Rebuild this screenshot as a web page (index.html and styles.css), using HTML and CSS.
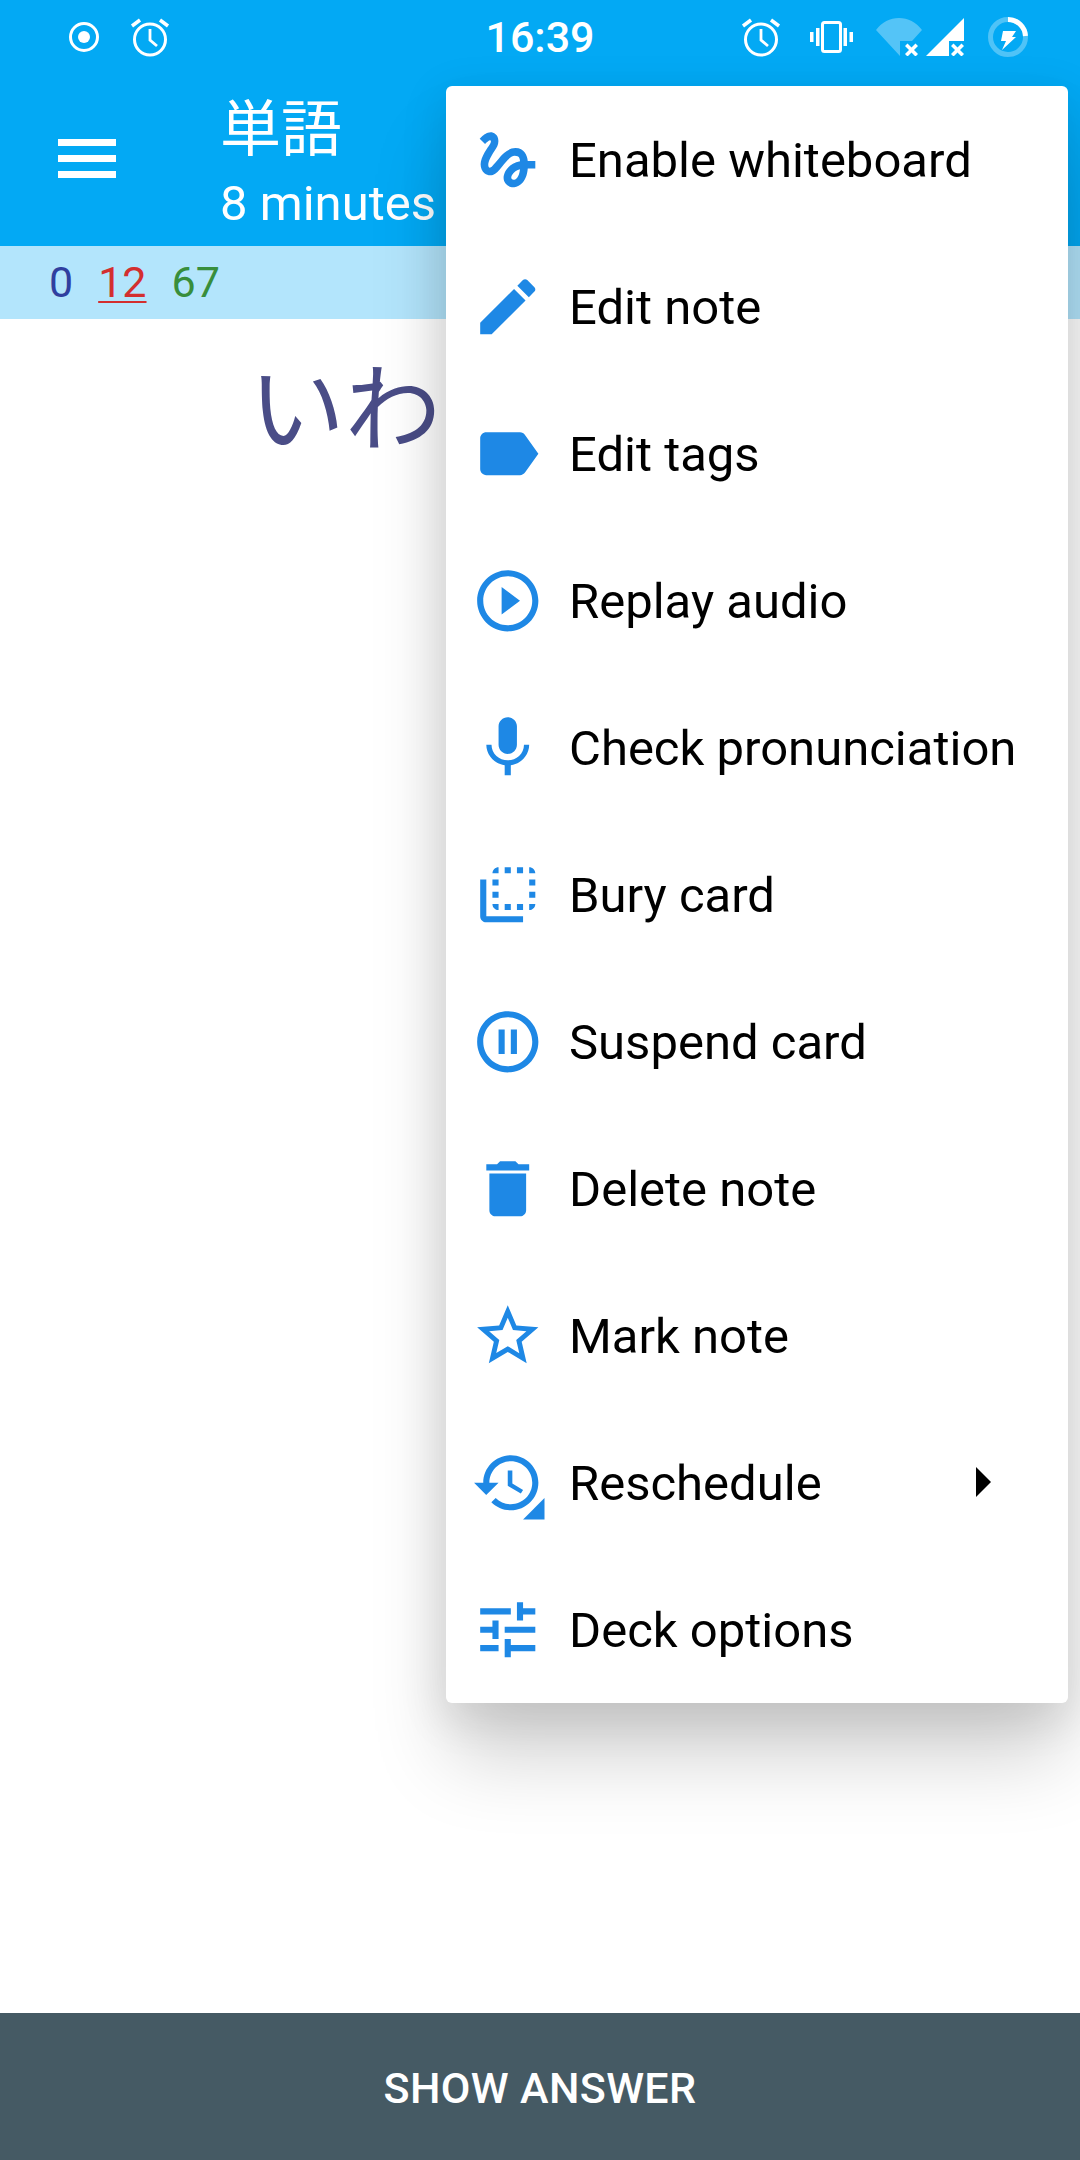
FILE: index.html
```html
<!DOCTYPE html>
<html lang="en">
<head>
<meta charset="utf-8">
<title>単語</title>
<link rel="stylesheet" href="styles.css">
</head>
<body>
<div class="screen">
  <header class="appbar">
    <div class="status">
      <div class="status-left">
        <svg class="ic-record" viewBox="0 0 32 32"><circle cx="16" cy="16" r="13.500" fill="none" stroke="#fff" stroke-width="3"/><circle cx="16" cy="16" r="6" fill="#fff"/></svg>
        <svg class="ic-alarm" viewBox="0 0 40 40"><use href="#alarm"/></svg>
      </div>
      <div class="clock">16:39</div>
      <div class="status-right">
        <svg class="ic-alarm" viewBox="0 0 40 40"><use href="#alarm"/></svg>
        <svg class="ic-vib" viewBox="0 0 43 32"><rect x="12.500" y="1.500" width="18" height="29" rx="2" fill="none" stroke="#fff" stroke-width="3"/><path d="M0 11h3.500v10H0zM6 7h3.500v18H6zM33.500 7H37v18h-3.500zM39.500 11H43v10h-3.500z" fill="#fff"/></svg>
        <svg class="ic-wifi" viewBox="0 0 46 38"><path d="M0 12C6 4 14 0 23 0s17 4 23 12L36 23H24v15z" fill="#fff" fill-opacity=".32"/><path d="M29 28l2.500-2.500 4 4 4-4L42 28l-4 4 4 4-2.500 2.500-4-4-4 4L29 36l4-4z" fill="#fff"/></svg>
        <svg class="ic-signal" viewBox="0 0 38 38"><path d="M0 38L38 0v23H23v15z" fill="#fff"/><path d="M25 28l2.500-2.500 4 4 4-4L38 28l-4 4 4 4-2.500 2.500-4-4-4 4L25 36l4-4z" fill="#fff"/></svg>
        <svg class="ic-batt" viewBox="0 0 40 40"><circle cx="20" cy="20" r="17.500" fill="none" stroke="#fff" stroke-opacity=".3" stroke-width="5"/><path d="M20 2.500A17.500 17.500 0 0 1 37.500 19" fill="none" stroke="#fff" stroke-width="5"/><path d="M15 14h13l-4 6h4L14 33l4-9h-5z" fill="#fff"/></svg>
      </div>
    </div>
    <div class="toolbar">
      <button class="burger" aria-label="Menu"><span></span><span></span><span></span></button>
      <div class="titles">
        <div class="title">単語</div>
        <div class="subtitle">8 minutes</div>
      </div>
    </div>
  </header>
  <div class="counts">
    <span class="new">0</span>
    <span class="learn">12</span>
    <span class="review">67</span>
  </div>
  <main class="card">
    <div class="word">いわ</div>
  </main>
  <footer class="answer">SHOW ANSWER</footer>

  <nav class="menu">
    <div class="item"><svg class="icon" viewBox="0 0 24 24"><path d="M4.59 6.89c.7-.71 1.4-1.35 1.71-1.22.5.2 0 1.03-.3 1.52-.25.42-2.86 3.89-2.86 6.31 0 1.28.48 2.34 1.34 2.98.75.56 1.74.73 2.64.46 1.07-.31 1.95-1.4 3.06-2.77 1.21-1.49 2.83-3.44 4.08-3.44 1.63 0 1.65 1.01 1.76 1.79-3.78.64-5.38 3.67-5.38 5.37 0 1.7 1.44 3.09 3.21 3.09 1.63 0 4.29-1.33 4.69-6.1H21v-2.5h-2.47c-.15-1.65-1.09-4.2-4.03-4.2-2.25 0-4.18 1.91-4.94 2.84-.58.73-2.06 2.48-2.29 2.72-.25.3-.68.84-1.11.84-.45 0-.72-.83-.36-1.92.35-1.09 1.4-2.86 1.85-3.52.78-1.14 1.3-1.92 1.3-3.28C8.95 3.69 7.31 3 6.44 3 5.12 3 3.97 4 3.72 4.25c-.36.36-.66.66-.88.93l1.75 1.71zm9.29 11.66c-.31 0-.74-.26-.74-.72 0-.6.73-2.2 2.87-2.76-.3 2.69-1.43 3.48-2.13 3.48z"/></svg><span>Enable whiteboard</span></div>
    <div class="item"><svg class="icon" viewBox="0 0 24 24"><path d="M3 17.25V21h3.75L17.81 9.94l-3.75-3.75L3 17.25zM20.71 7.04c.39-.39.39-1.02 0-1.41l-2.34-2.34c-.39-.39-1.02-.39-1.41 0l-1.83 1.83 3.75 3.75 1.83-1.83z"/></svg><span>Edit note</span></div>
    <div class="item"><svg class="icon" viewBox="0 0 24 24"><path d="M17.63 5.84C17.27 5.33 16.67 5 16 5L5 5.01C3.9 5.01 3 5.9 3 7v10c0 1.1.9 1.99 2 1.99L16 19c.67 0 1.27-.33 1.63-.84L22 12l-4.37-6.16z"/></svg><span>Edit tags</span></div>
    <div class="item"><svg class="icon" viewBox="0 0 24 24"><path d="M10 16.5l6-4.5-6-4.5v9zM12 2C6.48 2 2 6.48 2 12s4.48 10 10 10 10-4.48 10-10S17.52 2 12 2zm0 18c-4.41 0-8-3.59-8-8s3.59-8 8-8 8 3.59 8 8-3.59 8-8 8z"/></svg><span>Replay audio</span></div>
    <div class="item"><svg class="icon" viewBox="0 0 24 24"><path d="M12 14c1.66 0 2.99-1.34 2.99-3L15 5c0-1.66-1.34-3-3-3S9 3.34 9 5v6c0 1.66 1.34 3 3 3zm5.3-3c0 3-2.54 5.1-5.3 5.1S6.7 14 6.7 11H5c0 3.41 2.72 6.23 6 6.72V21h2v-3.28c3.28-.48 6-3.3 6-6.72h-1.7z"/></svg><span>Check pronunciation</span></div>
    <div class="item"><svg class="icon" viewBox="0 0 24 24"><path d="M9 7H7v2h2V7zm0 4H7v2h2v-2zm0-8c-1.11 0-2 .9-2 2h2V3zm4 12h-2v2h2v-2zm6-12v2h2c0-1.1-.9-2-2-2zm-6 0h-2v2h2V3zM9 17v-2H7c0 1.1.89 2 2 2zm10-4h2v-2h-2v2zm0-4h2V7h-2v2zm0 8c1.1 0 2-.9 2-2h-2v2zM5 7H3v12c0 1.1.89 2 2 2h12v-2H5V7zm10-2h2V3h-2v2zm0 12h2v-2h-2v2z"/></svg><span>Bury card</span></div>
    <div class="item"><svg class="icon" viewBox="0 0 24 24"><path d="M9 16h2V8H9v8zm3-14C6.48 2 2 6.48 2 12s4.48 10 10 10 10-4.48 10-10S17.52 2 12 2zm0 18c-4.41 0-8-3.59-8-8s3.59-8 8-8 8 3.59 8 8-3.59 8-8 8zm1-4h2V8h-2v8z"/></svg><span>Suspend card</span></div>
    <div class="item"><svg class="icon" viewBox="0 0 24 24"><path d="M6 19c0 1.1.9 2 2 2h8c1.1 0 2-.9 2-2V7H6v12zM19 4h-3.500l-1-1h-5l-1 1H5v2h14V4z"/></svg><span>Delete note</span></div>
    <div class="item"><svg class="icon" viewBox="0 0 24 24"><path d="M22 9.240l-7.190-.62L12 2 9.190 8.630 2 9.240l5.460 4.730L5.820 21 12 17.270 18.180 21l-1.630-7.030L22 9.240zM12 15.400l-3.760 2.270 1-4.280-3.320-2.880 4.380-.38L12 6.100l1.710 4.040 4.380.38-3.320 2.880 1 4.280L12 15.400z"/></svg><span>Mark note</span></div>
    <div class="item"><svg class="icon" viewBox="0 0 24 24"><path d="M13 3c-4.970 0-9 4.030-9 9H1l3.890 3.890.07.14L9 12H6c0-3.870 3.130-7 7-7s7 3.130 7 7-3.130 7-7 7c-1.930 0-3.680-.79-4.940-2.060l-1.420 1.420C8.270 19.990 10.510 21 13 21c4.970 0 9-4.030 9-9s-4.030-9-9-9zm-1 5v5l4.280 2.540.72-1.210-3.500-2.080V8H12z"/><path d="M24 17v7h-7z"/></svg><span>Reschedule</span><i class="more"></i></div>
    <div class="item"><svg class="icon" viewBox="0 0 24 24"><path d="M3 17v2h6v-2H3zM3 5v2h10V5H3zm10 16v-2h8v-2h-8v-2h-2v6h2zM7 9v2H3v2h4v2h2V9H7zm14 4v-2H11v2h10zm-6-4h2V7h4V5h-4V3h-2v6z"/></svg><span>Deck options</span></div>
  </nav>
</div>
<svg class="defs" width="0" height="0"><defs><g id="alarm" fill="none" stroke="#fff"><circle cx="20" cy="22.500" r="15.500" stroke-width="3"/><path d="M20 12v11l7 6" stroke-width="2.800"/><path d="M2 9l8-6M38 9l-8-6" stroke-width="3.500"/></g></defs></svg>
</body>
</html>
```
FILE: styles.css
```css
* { box-sizing: border-box; }
html, body { margin: 0; padding: 0; }
body { font-family: Roboto, "Noto Sans", sans-serif; background: #fff; }
.defs { position: absolute; }
.screen { position: relative; width: 1080px; height: 2160px; display: flex; flex-direction: column; overflow: hidden; }

.appbar { background: #03a9f4; color: #fff; height: 246px; flex: none; }
.status { height: 72px; display: grid; grid-template-columns: 1fr auto 1fr; align-items: center; padding-top: 2px; }
.status-left { display: flex; align-items: center; gap: 30px; padding-left: 68px; }
.status-right { display: flex; align-items: center; justify-content: flex-end; padding-right: 52px; }
.clock { font-size: 43px; font-weight: 500; line-height: 1; }
.ic-record { width: 32px; height: 32px; }
.ic-alarm { width: 40px; height: 40px; }
.ic-vib { width: 43px; height: 32px; margin-left: 29px; }
.ic-wifi { width: 46px; height: 38px; margin-left: 23px; }
.ic-signal { width: 38px; height: 38px; margin-left: 4px; }
.ic-batt { width: 40px; height: 40px; margin-left: 24px; }

.toolbar { height: 174px; display: flex; align-items: flex-start; }
.burger { width: 58px; height: 39px; margin: 67px 0 0 58px; padding: 0; border: 0; background: none; display: flex; flex-direction: column; justify-content: space-between; }
.burger span { display: block; height: 7px; background: #fff; }
.titles { margin-left: 104px; display: flex; flex-direction: column; }
.title { font-family: "Noto Sans CJK JP", sans-serif; font-size: 61px; line-height: 70px; margin-top: 18px; }
.subtitle { font-size: 49px; line-height: 56px; margin-top: 16px; }

.counts { height: 73px; flex: none; background: #b3e5fc; display: flex; align-items: center; gap: 25px; padding-left: 49px; font-size: 43px; font-weight: 400; line-height: 1; }
.new { color: #303f9f; }
.learn { color: #d32f2f; text-decoration: underline; text-decoration-thickness: 2px; text-underline-offset: 4px; }
.review { color: #388e3c; }

.card { flex: 1; padding: 37px 0 0 249px; }
.word { font-family: "Liberation Serif", "Noto Sans CJK JP", serif; font-size: 96px; line-height: 110px; color: #4a4d87; }

.answer { height: 147px; flex: none; background: #455a64; color: #fff; display: flex; align-items: center; justify-content: center; font-size: 43px; font-weight: 500; letter-spacing: .35px; padding-top: 2px; }

.menu { position: absolute; left: 446px; top: 86px; width: 622px; background: #fff; border-radius: 6px; box-shadow: 0 58px 80px -4px rgba(0,0,0,.18), 0 12px 44px 6px rgba(0,0,0,.09); }
.item { position: relative; height: 147px; display: flex; align-items: center; padding-left: 24.5px; font-size: 49px; color: #000; }
.item span { padding-top: 2px; }
.icon { width: 73.5px; height: 73.5px; flex: none; margin-right: 25px; fill: #1e88e5; overflow: visible; }
.more { position: absolute; left: 530px; top: 58px; width: 0; height: 0; border-left: 15px solid #000; border-top: 15px solid transparent; border-bottom: 15px solid transparent; }
```
